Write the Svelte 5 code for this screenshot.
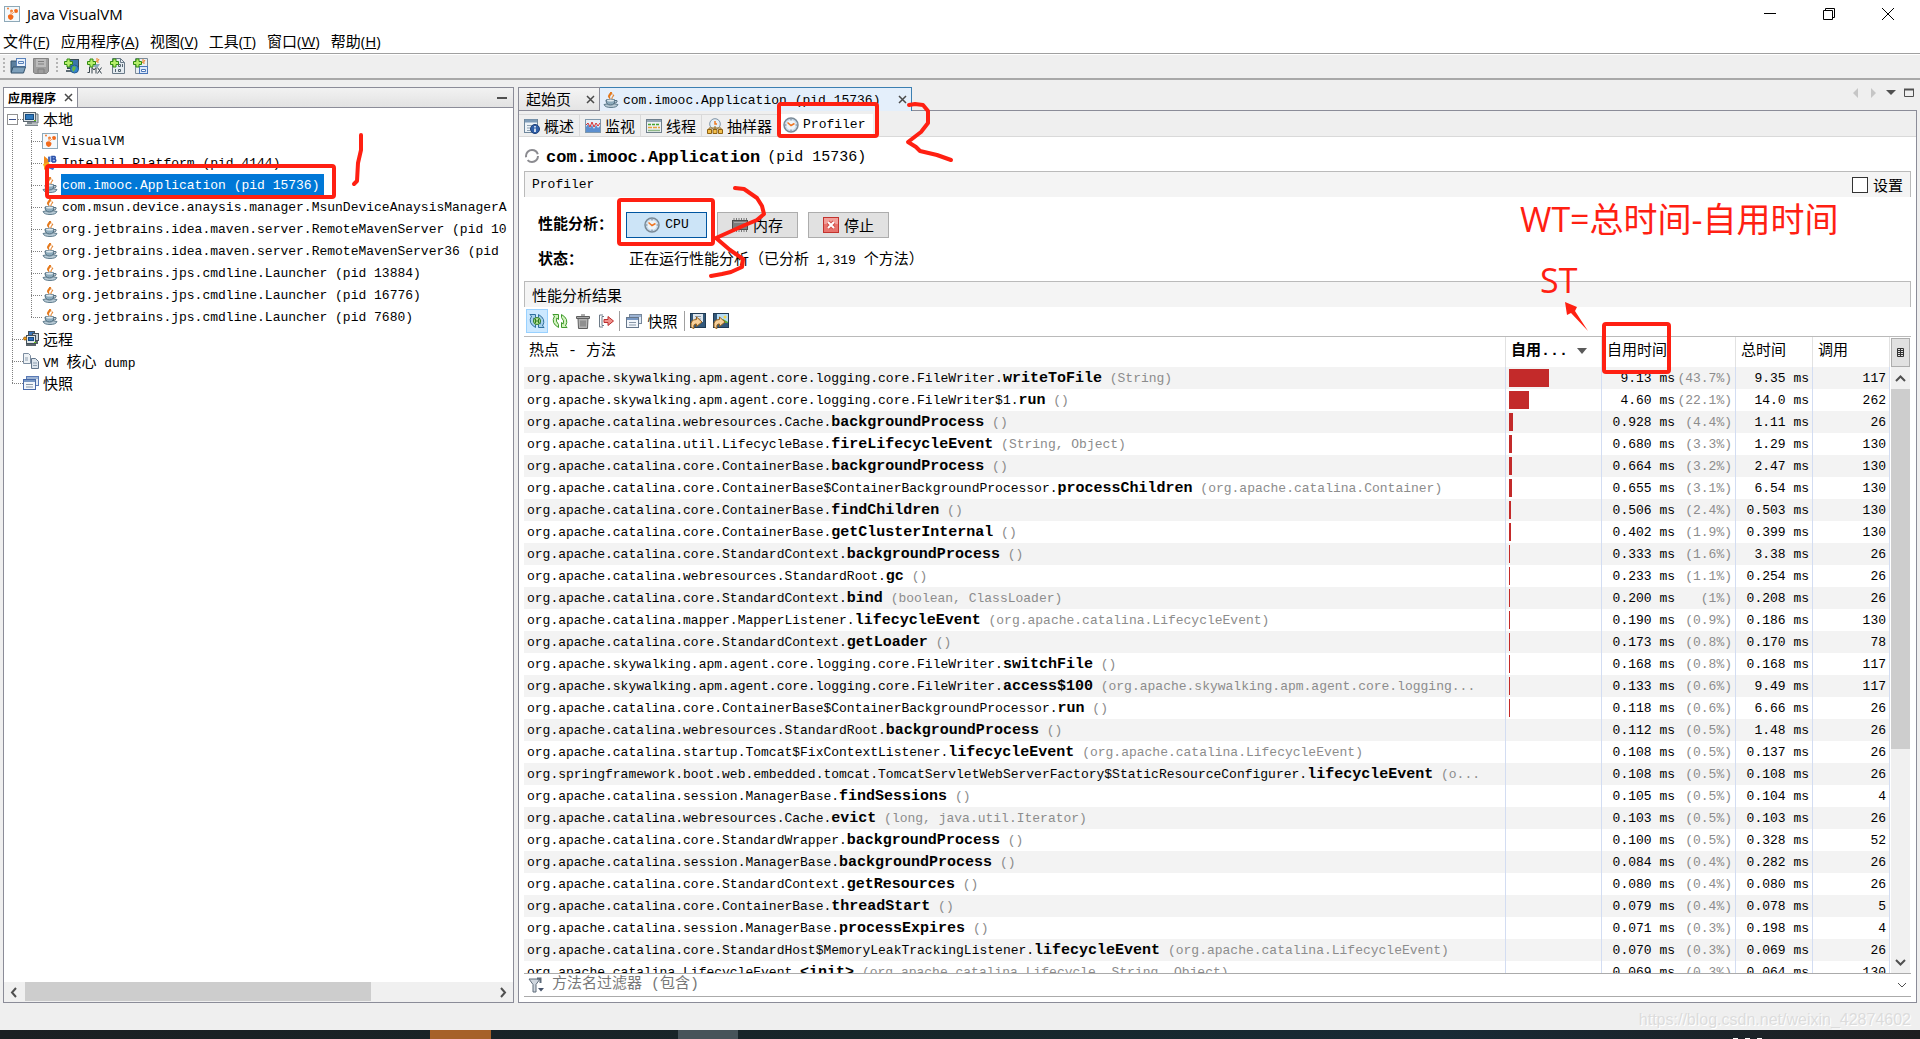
<script>
  const menus = [
    ['文件', 'F'], ['应用程序', 'A'], ['视图', 'V'], ['工具', 'T'], ['窗口', 'W'], ['帮助', 'H'],
  ];

  const apps = [
    { icon: 'visualvm', name: 'VisualVM' },
    { icon: 'idea', name: 'IntelliJ Platform (pid 4144)' },
    { icon: 'java', name: 'com.imooc.Application (pid 15736)', selected: true },
    { icon: 'java', name: 'com.msun.device.anaysis.manager.MsunDeviceAnaysisManagerA' },
    { icon: 'java', name: 'org.jetbrains.idea.maven.server.RemoteMavenServer (pid 10' },
    { icon: 'java', name: 'org.jetbrains.idea.maven.server.RemoteMavenServer36 (pid' },
    { icon: 'java', name: 'org.jetbrains.jps.cmdline.Launcher (pid 13884)' },
    { icon: 'java', name: 'org.jetbrains.jps.cmdline.Launcher (pid 16776)' },
    { icon: 'java', name: 'org.jetbrains.jps.cmdline.Launcher (pid 7680)' },
  ];

  const views = [
    ['overview', '概述'], ['monitor', '监视'], ['threads', '线程'], ['sampler', '抽样器'],
  ];

  // package and class, method, arguments, self time, share, total time, invocations
  const rows = [
    ['org.apache.skywalking.apm.agent.core.logging.core.FileWriter.', 'writeToFile', '(String)', '9.13', 43.7, '9.35', 117],
    ['org.apache.skywalking.apm.agent.core.logging.core.FileWriter$1.', 'run', '()', '4.60', 22.1, '14.0', 262],
    ['org.apache.catalina.webresources.Cache.', 'backgroundProcess', '()', '0.928', 4.4, '1.11', 26],
    ['org.apache.catalina.util.LifecycleBase.', 'fireLifecycleEvent', '(String, Object)', '0.680', 3.3, '1.29', 130],
    ['org.apache.catalina.core.ContainerBase.', 'backgroundProcess', '()', '0.664', 3.2, '2.47', 130],
    ['org.apache.catalina.core.ContainerBase$ContainerBackgroundProcessor.', 'processChildren', '(org.apache.catalina.Container)', '0.655', 3.1, '6.54', 130],
    ['org.apache.catalina.core.ContainerBase.', 'findChildren', '()', '0.506', 2.4, '0.503', 130],
    ['org.apache.catalina.core.ContainerBase.', 'getClusterInternal', '()', '0.402', 1.9, '0.399', 130],
    ['org.apache.catalina.core.StandardContext.', 'backgroundProcess', '()', '0.333', 1.6, '3.38', 26],
    ['org.apache.catalina.webresources.StandardRoot.', 'gc', '()', '0.233', 1.1, '0.254', 26],
    ['org.apache.catalina.core.StandardContext.', 'bind', '(boolean, ClassLoader)', '0.200', 1, '0.208', 26],
    ['org.apache.catalina.mapper.MapperListener.', 'lifecycleEvent', '(org.apache.catalina.LifecycleEvent)', '0.190', 0.9, '0.186', 130],
    ['org.apache.catalina.core.StandardContext.', 'getLoader', '()', '0.173', 0.8, '0.170', 78],
    ['org.apache.skywalking.apm.agent.core.logging.core.FileWriter.', 'switchFile', '()', '0.168', 0.8, '0.168', 117],
    ['org.apache.skywalking.apm.agent.core.logging.core.FileWriter.', 'access$100', '(org.apache.skywalking.apm.agent.core.logging...', '0.133', 0.6, '9.49', 117],
    ['org.apache.catalina.core.ContainerBase$ContainerBackgroundProcessor.', 'run', '()', '0.118', 0.6, '6.66', 26],
    ['org.apache.catalina.webresources.StandardRoot.', 'backgroundProcess', '()', '0.112', 0.5, '1.48', 26],
    ['org.apache.catalina.startup.Tomcat$FixContextListener.', 'lifecycleEvent', '(org.apache.catalina.LifecycleEvent)', '0.108', 0.5, '0.137', 26],
    ['org.springframework.boot.web.embedded.tomcat.TomcatServletWebServerFactory$StaticResourceConfigurer.', 'lifecycleEvent', '(o...', '0.108', 0.5, '0.108', 26],
    ['org.apache.catalina.session.ManagerBase.', 'findSessions', '()', '0.105', 0.5, '0.104', 4],
    ['org.apache.catalina.webresources.Cache.', 'evict', '(long, java.util.Iterator)', '0.103', 0.5, '0.103', 26],
    ['org.apache.catalina.core.StandardWrapper.', 'backgroundProcess', '()', '0.100', 0.5, '0.328', 52],
    ['org.apache.catalina.session.ManagerBase.', 'backgroundProcess', '()', '0.084', 0.4, '0.282', 26],
    ['org.apache.catalina.core.StandardContext.', 'getResources', '()', '0.080', 0.4, '0.080', 26],
    ['org.apache.catalina.core.ContainerBase.', 'threadStart', '()', '0.079', 0.4, '0.078', 5],
    ['org.apache.catalina.session.ManagerBase.', 'processExpires', '()', '0.071', 0.3, '0.198', 4],
    ['org.apache.catalina.core.StandardHost$MemoryLeakTrackingListener.', 'lifecycleEvent', '(org.apache.catalina.LifecycleEvent)', '0.070', 0.3, '0.069', 26],
    ['org.apache.catalina.LifecycleEvent.', '<init>', '(org.apache.catalina.Lifecycle, String, Object)', '0.069', 0.3, '0.064', 130],
  ];

  const barWidth = (share) => (share > 0.5 ? Math.round(share * 0.92) || 1 : 0);
</script>

{#snippet plus()}
  <path d="M4 1h3v2.500h2.500v3H7V9H4V6.500H1.500v-3H4z" fill="#b6ee6a" stroke="#2f8a12" />
{/snippet}

{#snippet icon(name)}
  <svg class="icon" width="16" height="16" viewBox="0 0 16 16" fill="none" aria-hidden="true">
    {#if name === 'visualvm'}
      <rect x="0.500" y="0.500" width="15" height="15" fill="#f4f9fc" stroke="#8ea9b8" />
      <path d="M4 9.500q3-2.500 5.500 0.500q0 3.500-3 4-3-1-2.500-4.500z" fill="#f26a1b" />
      <circle cx="12" cy="5" r="2" fill="#f26a1b" />
      <circle cx="7.500" cy="5" r="1.500" fill="#f47c30" />
      <circle cx="4" cy="2.500" r="1" fill="#f47c30" />
      <path d="M7 9l4-4M7 9l0-4" stroke="#f5a36e" />
    {:else if name === 'idea'}
      <path d="M2 1l5 4-1 6-4 4z" fill="#f28c1e" />
      <path d="M6 1h8l-2 6H7z" fill="#a9c3f0" />
      <path d="M1 9l6-2 1 6-5 2z" fill="#f6b01e" />
      <path d="M7 2v5M10 7V1.500h2.500q1.500 1.200 0 2.500H10h3q1.500 1.500 0 3h-3" stroke="#2a50a8" stroke-width="1.500" />
      <path d="M8 9l6 1-3 5-5-2z" fill="#3d6fd0" />
    {:else if name === 'java'}
      <path d="M8 0c3 2-3 3-1 6.500C4 4.500 6 3 8 0zM10 2.500c2 1.500-1.500 2-1 4.500" fill="#ef7d1a" stroke="#e0700f" />
      <path d="M1 12.500q7-2.500 14 0q-1 3-7 3t-7-3z" fill="#b9cbd6" stroke="#5f7c8d" />
      <path d="M3 8q5-1.500 9 0q0 5-4.500 5T3 8z" fill="#8caabb" stroke="#4e6b7d" />
      <path d="M12 8.500q3-.5 2 1.500-1 1-3 1" stroke="#4e6b7d" />
      <ellipse cx="7.500" cy="8.500" rx="3.500" ry="1" fill="#dfe9ee" />
    {:else if name === 'local'}
      <path d="M5 3h10v9H5z" fill="#c9d0d4" stroke="#6b747a" />
      <rect x="0.500" y="1.500" width="12" height="9" fill="#dfe5e8" stroke="#5b666e" />
      <rect x="2.500" y="3.500" width="8" height="5" fill="#2f79bd" stroke="#164a7e" />
      <path d="M4 11h5v2H4zM2 13.500h13v1.500H2z" fill="#7e888e" />
      <path d="M11 9h2v1h-2z" fill="#66c51c" />
    {:else if name === 'remote'}
      <rect x="5.500" y="0.500" width="6" height="4" fill="#3a74b8" stroke="#444f57" />
      <rect x="9.500" y="2.500" width="6" height="7" fill="#c9d2d8" stroke="#444f57" />
      <rect x="3.500" y="4.500" width="9" height="8" fill="#dfe5e8" stroke="#444f57" />
      <rect x="5.500" y="6.500" width="5" height="3" fill="#2d6dc0" stroke="#164a7e" />
      <circle cx="2" cy="7.500" r="1.500" fill="#f2a21d" stroke="#a5620a" />
      <path d="M3 14h10M8 13v2M14 10v3" stroke="#59636a" stroke-width="2" />
      <path d="M11 11h2v1h-2z" fill="#66c51c" />
    {:else if name === 'dump'}
      <path d="M.5.500h5l2 2v8h-7z" fill="#eef2f5" stroke="#7c8da0" />
      <path d="M8.500 5.500h4l3 3v7h-7z" fill="#dce4ec" stroke="#62758a" />
      <path d="M2 5h3M2 7h3M10 10h4M10 12.500h4" stroke="#8fa0b2" />
    {:else if name === 'snapshots' || name === 'snapshot'}
      <rect x="3.500" y="1.500" width="12" height="9" fill="#e3ebf5" stroke={name === 'snapshot' ? '#77879a' : '#5a7ab5'} />
      <path d="M4 3h11" stroke="#9db4d4" stroke-width="2" />
      <rect x="0.500" y="4.500" width="12" height="10" fill="#f2f6fb" stroke={name === 'snapshot' ? '#66778b' : '#4769a8'} />
      <path d="M1 6h11" stroke="#7898c4" stroke-width="2" />
      <path d="M3 9.500h7M3 12h7" stroke="#8897a8" />
    {:else if name === 'open'}
      <path d="M1 3h5l1 2v9H1z" fill="#5b7f9e" stroke="#34536c" />
      <rect x="6.500" y="0.500" width="9" height="8" fill="#e8f1fb" stroke="#5a82ba" />
      <path d="M8.500 3.500h5v2h-5z" stroke="#5a82ba" />
      <path d="M3 9h12.500l-2 6H1z" fill="#7ea0bb" stroke="#34536c" />
    {:else if name === 'save'}
      <path d="M.5.500h15v13l-2 2H2l-1.500-1z" fill="#9d9d9d" stroke="#848484" />
      <path d="M3 1h10v8H3z" fill="#bcbcbc" />
      <path d="M5 3.500h6M5 6h6M5 15v-4h6v4" stroke="#7f7f7f" />
    {:else if name === 'addHost'}
      <rect x="4.500" y="1.500" width="11" height="9" fill="#3b76aa" stroke="#3c4a54" />
      <path d="M3 13h8" stroke="#5c6a73" stroke-width="2" />
      <circle cx="11.500" cy="11" r="4" fill="#3583cf" stroke="#245b8c" />
      <path d="M10 8l3 1-1 3-2 2-1-3z" fill="#65b844" />
      {@render plus()}
    {:else if name === 'addJmx'}
      <path d="M9 5q3-2 2-5M13 1q-2 2-1 4" stroke="#ef7d1a" />
      <path d="M7 6h7l-2 3H8z" fill="#8caabb" />
      <path d="M1.500 14.500h2V9M6 15.500V9.500l2 2.500 2-2.500v6M11.500 9.500l4 6M15.500 9.500l-4 6" stroke="#37444d" />
      {@render plus()}
    {:else if name === 'addDump'}
      <path d="M3.500.500h8l4 4v11h-12z" fill="#e4ebf0" stroke="#6a7a88" />
      <path d="M11.500.500v4h4" stroke="#6a7a88" />
      <path d="M9.500 6.500h2v2h-2zM13.500 6v3M6.500 11v3M9.500 11.500h2v2h-2z" stroke="#53636f" />
      {@render plus()}
    {:else if name === 'addSnap'}
      <path d="M3.500.500h12v15h-12z" fill="#e8eef4" stroke="#7c8b98" />
      <path d="M9 6q3-2 2-5M13 2q-2 2-1 4" stroke="#ef7d1a" />
      <rect x="7.500" y="8.500" width="8" height="7" fill="#dce9fa" stroke="#4a76b8" />
      <path d="M9.500 11.500h4v2h-4z" fill="#fff" stroke="#4a76b8" />
      {@render plus()}
    {:else if name === 'overview'}
      <rect x="0.500" y="1.500" width="13" height="13" fill="#edf3f8" stroke="#6f879c" />
      <path d="M1 3h12" stroke="#7d9bb8" stroke-width="3" />
      <path d="M3 7.500h5M3 10h3M3 12.500h3" stroke="#8fa1b1" />
      <circle cx="11" cy="11" r="4.500" fill="#2f5fa8" stroke="#1d3f78" />
      <path d="M11 8v1.500M11 10.500v3.500" stroke="#fff" stroke-width="1.500" />
    {:else if name === 'monitor'}
      <rect x="0.500" y="1.500" width="15" height="13" fill="#e7eff6" stroke="#7f97ab" />
      <path d="M1 14V9l2-3 2 4 2-3 2 4 2-4 2 3 2-2v6z" fill="#5c8fcf" />
      <path d="M1 7l2-2 2 4 2-5 2 5 2-4 2 3 2-3" stroke="#d63232" />
    {:else if name === 'threads'}
      <rect x="0.500" y="1.500" width="15" height="13" fill="#edf1f4" stroke="#6f7f8c" />
      <path d="M1 3h14" stroke="#94a7b7" stroke-width="2" />
      <path d="M2 6.500h12" stroke="#49a52d" stroke-width="1.500" stroke-dasharray="3 1" />
      <path d="M2 9.500h12" stroke="#e9a33a" stroke-width="1.500" stroke-dasharray="4 1" />
      <path d="M2 12.500h12" stroke="#8fb886" stroke-width="1.500" />
    {:else if name === 'sampler'}
      <circle cx="8" cy="6" r="5.300" fill="#e7eff6" stroke="#7d92a5" />
      <path d="M8 3v3h2" stroke="#f07a22" stroke-width="1.500" />
      <path d="M2 12v-2h12v2M8 8v4" stroke="#9a6b17" />
      <path d="M.5 11.500h4v4h-4zM6 11.500h4v4H6zM11.500 11.500h4v4h-4z" fill="#f3c04e" stroke="#8f6111" />
    {:else if name === 'clock'}
      <circle cx="8" cy="8" r="7" fill="#c9dced" stroke="#7a8a97" stroke-width="1.500" />
      <circle cx="8" cy="8" r="4.800" fill="#eef5fa" />
      <path d="M4.500 5.500L8 8.500l3.500-2" stroke="#ef7522" stroke-width="1.500" />
      <path d="M8 2v1.500M8 12.500V14M2 8h1.500M12.500 8H14" stroke="#738392" />
    {:else if name === 'memory'}
      <path d="M2 1v14M4.500 1v14M7 1v14M9.500 1v14M12 1v14M14.500 1v14" stroke="#7a7a7a" />
      <rect x="0.500" y="3.500" width="15" height="9" fill="#7d7d7d" stroke="#4c4c4c" />
      <path d="M2 5.500h12" stroke="#a6a6a6" />
    {:else if name === 'stop'}
      <rect x="0.500" y="0.500" width="15" height="15" fill="#e8736d" stroke="#c2332e" />
      <path d="M1 1h14v6H1z" fill="#f2a09b" />
      <path d="M5 5l6 6M11 5l-6 6" stroke="#d0504a" stroke-width="4" />
      <path d="M5 5l6 6M11 5l-6 6" stroke="#fff" stroke-width="2" />
    {:else if name === 'auto' || name === 'refresh'}
      {@const tone = name === 'auto' ? '#2f6f9e' : '#3f9a2c'}
      {@const light = name === 'auto' ? '#a9d2ec' : '#d3f3bf'}
      <path d="M.8 1.500h5.700v5L4.800 5Q3.200 8 6.500 11.500v3Q-1.500 10 2.500 3z" fill={light} stroke={tone} stroke-linejoin="round" />
      <path d="M15.200 14.500H9.500v-5l1.700 1.500Q12.800 8 9.500 4.500v-3Q17.500 6 13.500 13z" fill={light} stroke={tone} stroke-linejoin="round" />
      {#if name === 'auto'}
        <circle cx="8" cy="8" r="3.500" fill="#b9e39a" stroke="#2f7d1f" />
        <path d="M6.500 8h3M6.500 6v4M9.500 6v4" stroke="#2f7d1f" />
      {/if}
    {:else if name === 'trash'}
      <path d="M1.500 3.500h13v2h-13zM6 2h4" fill="#a9a9a9" stroke="#5e5e5e" />
      <path d="M3 5.500h10l-.5 10h-9z" fill="#b4b4b4" stroke="#5e5e5e" />
      <path d="M6 7.500v6M8 7.500v6M10 7.500v6" stroke="#6c6c6c" />
    {:else if name === 'detach'}
      <path d="M5 2H1.500v12H5M6 3.500H4v9h2" stroke="#6d7b88" />
      <path d="M6 6.500h4v-3l5.500 4.500-5.500 4.500v-3H6z" fill="#f0928d" stroke="#bb2d2d" />
    {:else if name === 'exportData' || name === 'exportImage'}
      <rect x="0.500" y="0.500" width="15" height="14" fill="#33587a" stroke="#1f3a54" />
      {#if name === 'exportData'}
        <path d="M3 1h10v8H3z" fill="#dde5ec" />
        <path d="M5 3.500h6M5 6h6" stroke="#8b9aa8" />
      {:else}
        <path d="M4 1h11v9H4z" fill="#b5dcf5" />
        <path d="M6 10l4-4 5 3v1z" fill="#5aa83a" />
        <circle cx="12" cy="4" r="1.500" fill="#f7d648" />
      {/if}
      <path d="M1 13.500Q0 6.500 6.500 6.500V4l5.500 5-5.500 4.500V11Q3 10.500 4 15.500 2 15.500 1 13.500z" fill="#f7d09a" stroke="#96601b" />
    {:else if name === 'filter'}
      <path d="M1 2h11L8 7.500V15H5V7.500z" fill="#cfd6de" stroke="#5f6c7b" />
      <path d="M9 1.500h3.500V6" stroke="#5f6c7b" stroke-width="2" />
      <path d="M10 11h6l-3 3.500z" fill="#46536a" />
    {/if}
  </svg>
{/snippet}

{#snippet cross()}
  <svg width="9" height="9" viewBox="0 0 9 9" aria-hidden="true"><path d="M1 1l7 7M8 1L1 8" stroke="#4a4a4a" stroke-width="1.500" /></svg>
{/snippet}

{#snippet chevron(d)}
  <svg width="11" height="11" viewBox="0 0 11 11" fill="none" aria-hidden="true"><path {d} stroke="#505050" stroke-width="2" /></svg>
{/snippet}

<div class="window">
  <header class="title">
    {@render icon('visualvm')}
    <h1>Java VisualVM</h1>
    <div class="controls">
      <button aria-label="最小化"><svg width="12" height="12" viewBox="0 0 12 12"><path d="M0 5.500h12" stroke="#000" /></svg></button>
      <button aria-label="还原"><svg width="12" height="12" viewBox="0 0 12 12" fill="none" stroke="#000"><path d="M.5 2.500h9v9h-9zM2.500 2.500v-2h9v9h-2" /></svg></button>
      <button aria-label="关闭"><svg width="12" height="12" viewBox="0 0 12 12"><path d="M0 0l12 12M12 0L0 12" stroke="#000" /></svg></button>
    </div>
  </header>

  <nav class="menu">
    {#each menus as [label, key]}
      <button>{label}(<u>{key}</u>)</button>
    {/each}
  </nav>

  <div class="toolbar">
    <span class="grip"></span>
    <button aria-label="打开">{@render icon('open')}</button>
    <button aria-label="保存" disabled>{@render icon('save')}</button>
    <span class="grip second"></span>
    <button aria-label="添加远程主机">{@render icon('addHost')}</button>
    <button aria-label="添加 JMX 连接">{@render icon('addJmx')}</button>
    <button aria-label="添加核心 dump">{@render icon('addDump')}</button>
    <button aria-label="添加快照">{@render icon('addSnap')}</button>
  </div>

  <main>
    <aside class="panel">
      <div class="panel-head">
        <div class="panel-tab"><b>应用程序</b><button aria-label="关闭应用程序">{@render cross()}</button></div>
        <button class="dash" aria-label="最小化面板"><span></span></button>
      </div>
      <ul class="tree">
        <li class="root">
          <button class="expander" aria-label="折叠"><span></span></button><span class="guide stub"></span>
          {@render icon('local')}<span class="cjk">本地</span>
        </li>
        {#each apps as app, i}
          <li>
            <span class="guide trunk"></span>
            <span class="guide branch" class:last={i === apps.length - 1}></span>
            {@render icon(app.icon)}<span class="node" class:selected={app.selected}>{app.name}</span>
          </li>
        {/each}
        <li><span class="guide branch"></span>{@render icon('remote')}<span class="cjk">远程</span></li>
        <li><span class="guide branch"></span>{@render icon('dump')}<span class="node">VM <span class="cjk">核心</span> dump</span></li>
        <li><span class="guide branch last"></span>{@render icon('snapshots')}<span class="cjk">快照</span></li>
      </ul>
      <div class="hscroll">
        <button aria-label="向左滚动">{@render chevron('M7 1L3 5.500 7 10')}</button>
        <div class="track"><span class="thumb"></span></div>
        <button aria-label="向右滚动">{@render chevron('M4 1l4 4.500L4 10')}</button>
      </div>
    </aside>

    <section class="work">
      <div class="doc-tabs">
        <div class="doc-tab"><span class="cjk">起始页</span><button aria-label="关闭起始页">{@render cross()}</button></div>
        <div class="doc-tab current">{@render icon('java')}<span class="doc-name">com.imooc.Application (pid 15736)</span><button aria-label="关闭标签">{@render cross()}</button></div>
        <div class="doc-nav">
          <svg width="62" height="12" viewBox="0 0 62 12" aria-hidden="true">
            <path d="M5 1v10L0 6zM18 1l5 5-5 5z" fill="#c6c6c6" />
            <path d="M33 3h10l-5 5z" fill="#505050" />
            <path d="M51.500 2.500h9v7h-9z" fill="none" stroke="#505050" /><path d="M51 2.500h10" stroke="#505050" stroke-width="2" />
          </svg>
        </div>
      </div>

      <div class="doc">
        <div class="views">
          {#each views as [name, label]}
            <button class="view">{@render icon(name)}<span class="cjk">{label}</span></button>
          {/each}
          <button class="view active">{@render icon('clock')}<span class="mono">Profiler</span></button>
        </div>

        <div class="content">
          <h2>
            <svg width="18" height="18" viewBox="0 0 18 18" fill="none" aria-hidden="true">
              <circle cx="8" cy="7" r="6" stroke="#8b8b90" stroke-width="2" stroke-dasharray="14 3 18 3" />
            </svg>
            <b>com.imooc.Application</b><span>(pid 15736)</span>
          </h2>

          <div class="section">
            <span class="mono">Profiler</span>
            <label class="cjk"><input type="checkbox" />设置</label>
          </div>

          <div class="form">
            <b>性能分析：</b>
            <div class="buttons">
              <button class="on">{@render icon('clock')}<span class="mono">CPU</span></button>
              <button>{@render icon('memory')}内存</button>
              <button>{@render icon('stop')}停止</button>
            </div>
            <b>状态：</b>
            <p>正在运行性能分析（已分析<span class="mono">{' 1,319 '}</span>个方法）</p>
          </div>

          <div class="section"><span class="cjk">性能分析结果</span></div>

          <div class="result-bar">
            <button class="pressed" aria-label="自动刷新">{@render icon('auto')}</button>
            <button aria-label="刷新">{@render icon('refresh')}</button>
            <button aria-label="清除">{@render icon('trash')}</button>
            <button aria-label="分离">{@render icon('detach')}</button>
            <i></i>
            <button class="snap">{@render icon('snapshot')}快照</button>
            <i></i>
            <button aria-label="导出数据">{@render icon('exportData')}</button>
            <button aria-label="导出图像">{@render icon('exportImage')}</button>
          </div>

          <div class="results">
            <div class="table-clip">
              <table>
                <colgroup><col /><col class="c-bar" /><col class="c-self" /><col class="c-total" /><col class="c-calls" /></colgroup>
                <thead>
                  <tr>
                    <th>热点 - 方法</th>
                    <th class="sorted">自用... <svg width="10" height="6" viewBox="0 0 10 6" aria-hidden="true"><path d="M0 0h10L5 6z" fill="#5a5a5a" /></svg></th>
                    <th>自用时间</th><th>总时间</th><th>调用</th>
                  </tr>
                </thead>
                <tbody>
                  {#each rows as [path, method, args, self, share, total, calls]}
                    <tr>
                      <td class="method">{path}<b>{method}</b> <span class="dim">{args}</span></td>
                      <td class="bar"><div style:width="{barWidth(share)}px"></div></td>
                      <td class="num">{self} ms<span class="dim share">({share}%)</span></td>
                      <td class="num">{total} ms</td>
                      <td class="num">{calls}</td>
                    </tr>
                  {/each}
                </tbody>
              </table>
            </div>
            <div class="vscroll">
              <button class="columns" aria-label="选择列">
                <svg width="7" height="9" viewBox="0 0 7 9" fill="none" stroke="#333" aria-hidden="true"><path d="M.5.500h6v8h-6zM.5 2.500h6M.5 4.500h6M.5 6.500h6M3.500 0v9" /></svg>
              </button>
              <button aria-label="向上滚动">{@render chevron('M1 8l4.500-4.500L10 8')}</button>
              <div class="track"><span class="thumb"></span></div>
              <button aria-label="向下滚动">{@render chevron('M1 3l4.500 4.500L10 3')}</button>
            </div>
          </div>

          <div class="filter">
            {@render icon('filter')}
            <input type="text" aria-label="方法名过滤器" placeholder="方法名过滤器 (包含)" />
            <button aria-label="展开过滤器"><svg width="10" height="6" viewBox="0 0 10 6" fill="none"><path d="M1 1l4 4 4-4" stroke="#505050" /></svg></button>
          </div>
        </div>
      </div>
    </section>
  </main>

  <footer class="status">https://blog.csdn.net/weixin_42874602</footer>
  <div class="taskbar"><span class="task-orange"></span><span class="task-gray"></span><span class="clock-tops"></span></div>

  <svg class="marks" width="1920" height="400" viewBox="0 0 1920 400" fill="none" stroke="#ff2012" stroke-width="4" stroke-linecap="round" stroke-linejoin="round" aria-hidden="true">
    <rect x="47" y="166" width="287" height="31" rx="2" />
    <rect x="779" y="104" width="98" height="32" rx="2" />
    <rect x="619" y="200" width="94" height="44" rx="2" />
    <rect x="1604" y="324" width="65" height="48" rx="2" />
    <path d="M361 135v15l-3 13-1 18-3 3" />
    <path d="M909 105l6-1 8 1 5 6v12l-7 9-13 10 8 5 4 4 17 4 14 5" />
    <path d="M735 188l9 1 13 9 5 8 2 8-7 6-12 5-29 13 14 12 13 9-1 8-11 5-9 2-11 2" />
    <path d="M1565 302l12 5-2 4 13 20-17-18-4 2z" fill="#ff2012" stroke="none" />
  </svg>
  <span class="note note-wt">WT=总时间-自用时间</span>
  <span class="note note-st">ST</span>
</div>

<style>
  :global(body) { background: #efefef; }

  .window {
    --mono: "Liberation Mono", "Noto Sans CJK SC", monospace;
    --cjk: "Noto Sans CJK SC", sans-serif;
    position: relative;
    display: flex;
    flex-direction: column;
    height: 100vh;
    overflow: hidden;
    background: #efefef;
    color: #000;
    font: 13px/22px var(--mono);
  }
  .window * { box-sizing: border-box; }
  button {
    display: flex;
    align-items: center;
    justify-content: center;
    padding: 0;
    border: 0;
    background: none;
    color: inherit;
    font: inherit;
  }
  svg { display: block; flex: none; }
  ul, h1, h2, p { margin: 0; padding: 0; font-weight: normal; }
  .cjk { font: 15px/22px var(--cjk); white-space: nowrap; }
  .mono { font: 13px/22px var(--mono); white-space: pre; }

  .title { display: flex; align-items: center; gap: 7px; height: 29px; padding: 0 3px 2px 4px; background: #fff; }
  .title h1 { flex: 1; font: 15px/26px "Open Sans", sans-serif; }
  .controls { display: flex; }
  .controls button { width: 59px; height: 26px; }

  .menu { display: flex; gap: 11px; height: 25px; padding-left: 3px; background: #fff; border-bottom: 1px solid #a0a0a0; }
  .menu button { font: 15px/24px "Open Sans", var(--cjk); }

  .toolbar { display: flex; align-items: center; gap: 7px; height: 26px; padding: 0 3px 2px; border-top: 1px solid #fff; border-bottom: 2px solid #a8a8a8; }
  .grip { width: 2px; height: 15px; margin-right: -2px; background: repeating-linear-gradient(#b4b4b4 0 2px, transparent 2px 4px); }
  .grip.second { margin-right: -2px; }

  main {
    flex: 1;
    display: grid;
    grid-template-columns: minmax(0, 511fr) minmax(0, 1399fr);
    grid-template-rows: minmax(0, 1fr);
    gap: 4px;
    min-height: 0;
    padding: 7px 3px 0;
  }

  .panel { display: flex; flex-direction: column; border: 1px solid #8b8c98; background: #fff; }
  .panel-head { display: flex; height: 20px; border-bottom: 1px solid #8b8c98; background: linear-gradient(#f2f2f2, #e2e2e2); }
  .panel-tab { display: flex; align-items: center; gap: 8px; padding: 0 4px; border-right: 1px solid #8b8c98; background: #fff; }
  .panel-tab b { font: bold 12px/19px var(--cjk); }
  .dash { margin-left: auto; width: 22px; }
  .dash span { width: 10px; height: 2px; background: #505050; }

  .tree { flex: 1; min-height: 0; overflow: hidden; list-style: none; }
  .tree li { display: flex; align-items: center; height: 22px; padding-left: 8px; white-space: nowrap; }
  .tree li.root { padding-left: 3px; }
  .tree .cjk { margin-left: 4px; line-height: 20px; }
  .node { height: 22px; margin-left: 3px; padding: 2px 5px 0 1px; line-height: 20px; }
  .tree .node .cjk { margin: 0; line-height: 18px; }
  .node.selected { background: #0078d7; color: #fff; }
  .expander { width: 11px; height: 11px; border: 1px solid #919191; background: #fff; }
  .expander span { width: 7px; height: 1px; background: #3b4f8a; }
  .guide {
    flex: none;
    align-self: stretch;
    background-repeat: no-repeat;
    background-image: repeating-linear-gradient(#808080 0 1px, transparent 1px 2px), repeating-linear-gradient(90deg, #808080 0 1px, transparent 1px 2px);
  }
  .trunk { width: 19px; background-size: 1px 100%, 0 0; }
  .branch { width: 11px; background-size: 1px 100%, 100% 1px; background-position: 0 0, 0 50%; }
  .branch.last { background-size: 1px 50%, 100% 1px; }
  .stub { width: 5px; background-size: 0 0, 100% 1px; background-position: 0 0, 0 50%; }

  .hscroll { display: flex; height: 20px; background: #f0f0f0; }
  .hscroll button { width: 21px; }
  .track { flex: 1; display: flex; }
  .thumb { background: #cdcdcd; }
  .hscroll .thumb { width: 74%; height: 19px; }

  .work { display: flex; flex-direction: column; min-width: 0; }
  .doc-tabs { display: flex; height: 24px; border-bottom: 1px solid #8b8c98; }
  .doc-tab { display: flex; align-items: center; justify-content: space-between; width: 82px; padding: 0 4px 0 7px; border: 1px solid #8b8c98; border-bottom: 0; background: linear-gradient(#f4f4f4, #e4e4e4); }
  .doc-tab.current { width: 312px; height: 24px; gap: 4px; padding-left: 3px; border-color: #3c7fb1; border-left: 0; background: #e4effb; }
  .doc-name { flex: 1; padding-top: 3px; white-space: nowrap; line-height: 20px; }
  .doc-nav { display: flex; align-items: flex-start; margin-left: auto; padding-right: 2px; }

  .doc { flex: 1; display: flex; flex-direction: column; min-height: 0; border: 1px solid #8b8c98; border-top: 0; background: #fff; }
  .views { display: flex; height: 26px; padding-top: 3px; border-bottom: 1px solid #d9d9d9; background: #efefef; }
  .view { gap: 4px; padding: 0 5px; border: 1px solid #d9d9d9; border-width: 1px 1px 0 0; }
  .view.active { padding-right: 8px; border: 0; background: #fff; }

  .content { flex: 1; display: flex; flex-direction: column; min-height: 0; padding: 0 5px 5px; }
  h2 { display: flex; align-items: center; height: 34px; gap: 4px; padding-top: 8px; font: 15px/22px var(--mono); }
  h2 b { font-size: 17px; }
  h2 span { margin-left: 3px; }
  .section { display: flex; align-items: center; justify-content: space-between; flex: none; height: 26px; padding: 0 7px; border: 1px solid #bababa; border-bottom: 0; background: #f4f4f4; }
  .section .cjk { line-height: 20px; }
  .section label { display: flex; align-items: center; gap: 5px; }
  .section input { appearance: none; width: 16px; height: 16px; margin: 0; border: 1px solid #333; background: #fff; }

  .form { display: grid; grid-template-columns: 88px 1fr; grid-template-rows: 26px 22px; row-gap: 9px; flex: none; height: 84px; padding: 15px 14px 0; font: 15px/22px var(--cjk); }
  .form b { white-space: nowrap; }
  .form p { padding-left: 3px; }
  .buttons { display: flex; gap: 10px; }
  .buttons button { gap: 5px; width: 81px; height: 26px; border: 1px solid #adadad; background: #e1e1e1; }
  .buttons button.on { border-color: #0055a0; background: #cce4f7; }

  .result-bar { display: flex; align-items: center; flex: none; gap: 1px; height: 30px; padding: 0 0 2px 2px; border-bottom: 1px solid #bababa; }
  .result-bar button { width: 22px; height: 24px; }
  .result-bar .pressed { border: 1px solid #99d1ff; background: #cce8ff; }
  .result-bar .snap { width: 60px; gap: 5px; font: 15px/20px var(--cjk); }
  .result-bar i { width: 1px; height: 20px; margin: 0 1px; background: #a0a0a0; }

  .results { flex: 1; display: flex; min-height: 0; }
  .table-clip { flex: 1; min-width: 0; overflow: hidden; }
  table { width: 100%; table-layout: fixed; border-collapse: separate; border-spacing: 0; }
  .c-bar { width: 96px; }
  .c-self { width: 134px; }
  .c-total { width: 77px; }
  .c-calls { width: 77px; }
  th { height: 30px; padding: 0 5px; border-right: 1px solid #e2e2e2; text-align: left; font: 15px/22px var(--mono); white-space: nowrap; overflow: hidden; }
  th.sorted { font-weight: bold; }
  th svg { display: inline-block; vertical-align: middle; }
  td { height: 22px; padding: 2px 3px 0; border-right: 1px solid #d3ddf2; white-space: nowrap; overflow: hidden; line-height: 20px; }
  tbody tr:nth-child(odd) { background: #f3f3f3; }
  .method b { font-size: 15px; line-height: 18px; }
  .num { text-align: right; }
  .dim { color: #8c8c8c; }
  .share { display: inline-block; width: 57px; }
  .bar { padding-top: 0; }
  .bar div { height: 18px; background: #c32a2a; }

  .vscroll { display: flex; flex-direction: column; width: 21px; padding: 1px 1px 0; }
  .vscroll button { flex: none; height: 22px; background: #f0f0f0; }
  .vscroll .columns { height: 29px; border: 1px solid #adadad; background: #e1e1e1; }
  .vscroll .track { background: #f0f0f0; }
  .vscroll .thumb { width: 100%; height: 64%; }

  .filter { display: flex; align-items: center; flex: none; height: 24px; padding: 0 4px; border: 1px solid #ababab; border-width: 1px 0; }
  .filter input { flex: 1; height: 20px; padding: 0 8px; border: 0; background: none; font: 15px/20px var(--mono); }
  .filter input::placeholder { color: #777; }

  .status { flex: none; height: 27px; padding: 6px 9px 0 0; text-align: right; color: #dcdcdc; font: 16px/21px "Liberation Sans", sans-serif; text-shadow: 1px 1px 0 #fff; }
  .taskbar { display: flex; flex: none; height: 9px; background: linear-gradient(90deg, #1b1f22, #17272b 50%, #182a35 75%, #1e1e20); }
  .task-orange { width: 61px; margin-left: 430px; background: #a66129; }
  .task-gray { width: 60px; margin-left: 187px; background: #47545a; }
  .clock-tops { align-self: flex-end; width: 29px; height: 1px; margin: 0 158px 0 auto; background: repeating-linear-gradient(90deg, #fff 0 5px, transparent 5px 12px); }

  .marks { position: absolute; top: 0; left: 0; pointer-events: none; }
  .note { position: absolute; color: #ff2012; font: 34px/40px "Open Sans", "Noto Sans CJK SC", sans-serif; white-space: nowrap; }
  .note-wt { top: 199px; left: 1520px; }
  .note-st { top: 260px; left: 1540px; }
</style>
